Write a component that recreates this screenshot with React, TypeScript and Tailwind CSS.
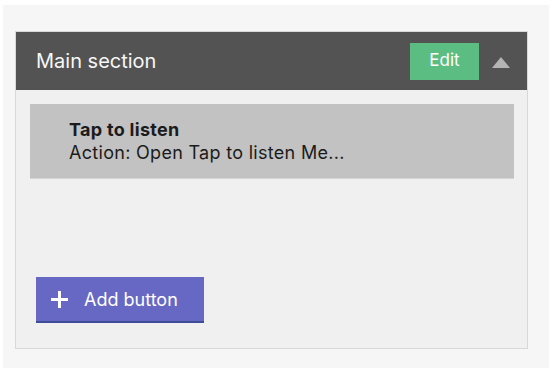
import React from 'react';

const font = { fontFamily: 'Inter, "Open Sans", "Liberation Sans", sans-serif' };

const App = () => {
  return (
    <div className="w-[556px] h-[368px] bg-white pt-[5px] pl-[3px] pr-[7px]" style={font}>
      <div className="h-full bg-[#f6f6f6] pl-[12px] pr-[21px] pt-[26px]">
        <div className="w-[513px] h-[318px] border border-[#d8d8d8] bg-[#f0f0f0] flex flex-col">
          {/* header */}
          <div className="h-[58px] bg-[#535353] flex items-center pl-[20px] pr-[17px]">
            <span className="text-[20px] text-[#f7f7f7]">Main section</span>
            <div className="ml-auto flex items-center">
              <button className="w-[69px] h-[37px] bg-[#5cbd82] text-white text-[17px] flex items-center justify-center">
                Edit
              </button>
              <svg width="18" height="11" viewBox="0 0 18 11" className="ml-[13px] mt-[3px]">
                <polygon points="9,0 18,11 0,11" fill="#b4b4b4" />
              </svg>
            </div>
          </div>

          {/* body */}
          <div className="flex-1 pt-[14px] pl-[14px] pr-[13px]">
            <div className="h-[75px] bg-[#c2c2c2] border-b border-[#d4d4d4] pl-[39px] py-[14px] text-[18px] leading-[23px] tracking-[0.3px] text-[#1b1b1b]">
              <div className="font-bold">Tap to listen</div>
              <div>Action: Open Tap to listen Me...</div>
            </div>

            <button className="mt-[98px] ml-[6px] w-[168px] h-[46px] bg-[#6768c4] border-b-2 border-[#3f4d98] flex items-center pl-[15px] text-white text-[18px]">
              <svg width="17" height="17" viewBox="0 0 17 17" className="mr-[16px]">
                <rect x="7" y="0" width="3" height="17" fill="white" />
                <rect x="0" y="7" width="17" height="3" fill="white" />
              </svg>
              Add button
            </button>
          </div>
        </div>
      </div>
    </div>
  );
};

export default App;
